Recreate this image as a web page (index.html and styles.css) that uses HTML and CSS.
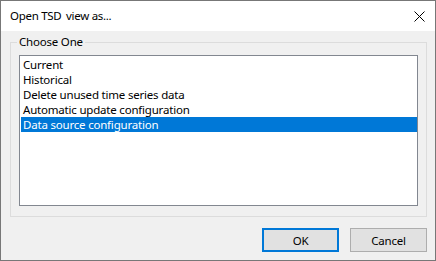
FILE: index.html
```html
<!DOCTYPE html>
<html lang="en">
<head>
    <meta charset="UTF-8">
    <title>Open TSD view as...</title>
    <link rel="stylesheet" href="styles.css">
</head>
<body>
    <div class="dialog">
        <div class="title-bar">
            <span class="title">Open TSD <span class="gap">view as...</span></span>
            <svg class="close" width="11" height="11" viewBox="0 0 11 11">
                <path d="M0.5 0.5 L10.5 10.5 M10.5 0.5 L0.5 10.5" stroke="#000" stroke-width="1" fill="none"/>
            </svg>
        </div>

        <div class="content">
            <!-- Group box -->
            <div class="group">
                <span class="group-label">Choose One</span>
                <ul class="listbox">
                    <li>Current</li>
                    <li>Historical</li>
                    <li>Delete unused time series data</li>
                    <li>Automatic update configuration</li>
                    <li class="selected">Data source configuration</li>
                </ul>
            </div>

            <div class="buttons">
                <button class="default">OK</button>
                <button>Cancel</button>
            </div>
        </div>
    </div>
</body>
</html>
```

FILE: styles.css
```css
body {
    margin: 0;
    font-family: "Noto Sans", "Liberation Sans", sans-serif;
    font-size: 11.5px;
    letter-spacing: -0.2px;
    color: #000;
}
.dialog {
    width: 436px;
    height: 261px;
    box-sizing: border-box;
    border: 1px solid #777;
    background: #f0f0f0;
}
.title-bar {
    height: 30px;
    background: #fff;
    display: flex;
    align-items: center;
    justify-content: space-between;
    padding: 0 10px 0 9px;
}
.title {
    font-size: 11.5px;
    letter-spacing: -0.3px;
    padding-bottom: 1px;
}
.title .gap {
    margin-left: 2px;
}
.close {
    display: block;
    margin-top: 1px;
}
.content {
    padding: 11px 8px 0 9px;
}
.group {
    position: relative;
    border: 1px solid #dcdcdc;
    padding: 12px 8px 10px 8px;
}
.group-label {
    position: absolute;
    left: 6px;
    top: -9px;
    padding: 0 2px;
    background: #f0f0f0;
    line-height: 16px;
}
.listbox {
    list-style: none;
    margin: 0;
    padding: 1px 0 0 1px;
    height: 148px;
    border: 1px solid #828790;
    background: #fff;
}
.listbox li {
    height: 15px;
    line-height: 15px;
    padding-left: 2px;
    white-space: nowrap;
}
.listbox li.selected {
    background: #0078d7;
    color: #fff;
}
.buttons {
    display: flex;
    justify-content: flex-end;
    gap: 11px;
    margin-top: 11px;
}
.buttons button {
    width: 77px;
    height: 24px;
    padding: 0;
    font-family: inherit;
    font-size: 11.5px;
    letter-spacing: -0.2px;
    background: #e1e1e1;
    border: 1px solid #adadad;
    color: #000;
}
.buttons button.default {
    border: 2px solid #0078d7;
}
```
